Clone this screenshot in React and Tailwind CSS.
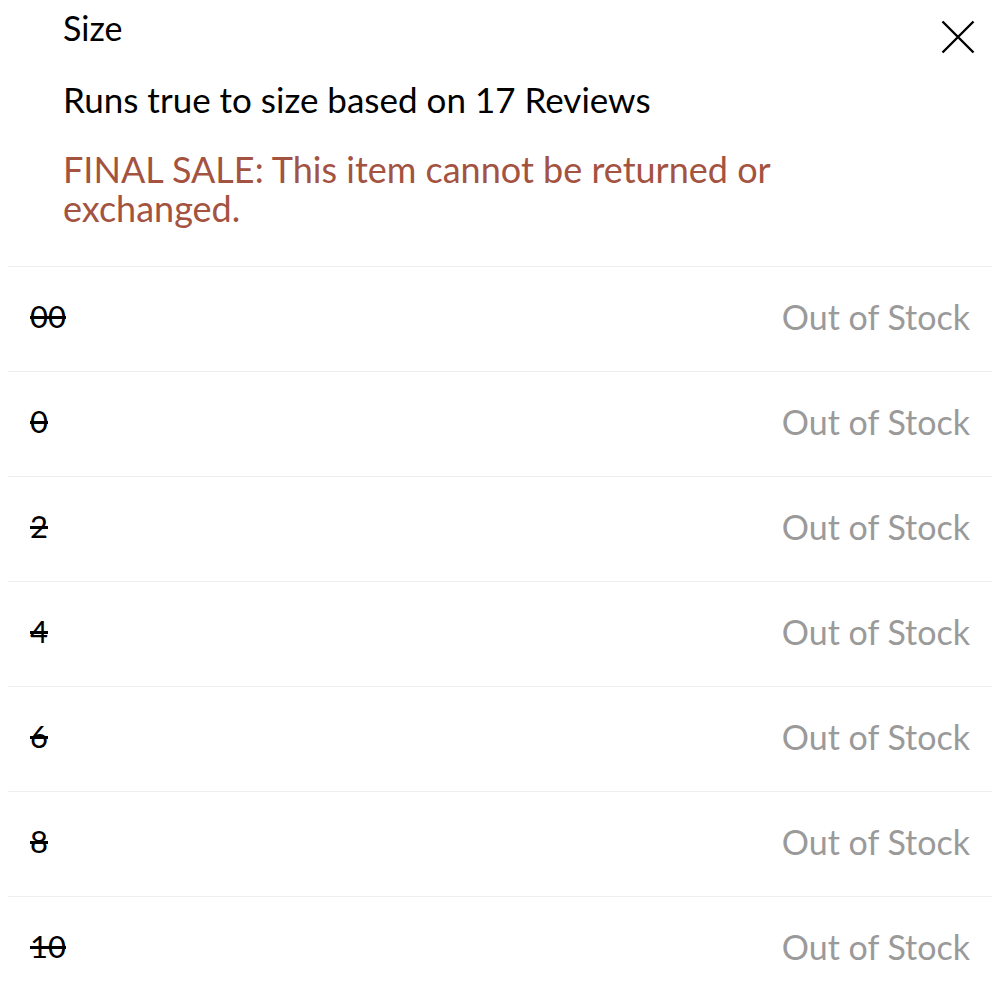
import React from 'react';

const sizes = ['00', '0', '2', '4', '6', '8', '10'];

const App = () => {
  return (
    <div className="min-h-screen bg-white font-['Lato','Liberation_Sans',sans-serif] text-black">
      <div className="flex items-start justify-between pl-[63px] pr-[25px] pt-[9px]">
        <h2 className="text-[34px] leading-[38px]">Size</h2>
        <button type="button" className="mt-[11px] text-black" aria-label="Close">
          <svg width="34" height="34" viewBox="0 0 34 34" fill="none" stroke="currentColor" strokeWidth="2.4">
            <path d="M1.5 1.5L32.5 32.5M32.5 1.5L1.5 32.5" />
          </svg>
        </button>
      </div>

      <p className="pl-[63px] mt-[25px] text-[35px] leading-[40px]">Runs true to size based on 17 Reviews</p>

      <p className="pl-[63px] pr-[200px] mt-[31px] text-[36px] leading-[39px] text-[#a3533f]">
        FINAL SALE: This item cannot be returned or exchanged.
      </p>

      <ul className="mx-[8px] mt-[38px]">
        {sizes.map((s) => (
          <li
            key={s}
            className="flex h-[105px] items-center justify-between border-t border-[#eeeeee] pb-[6px] pl-[22px] pr-[22px]"
          >
            <span className="text-[31px] line-through">{s}</span>
            <span className="text-[34px] text-[#9a9a9a]">Out of Stock</span>
          </li>
        ))}
      </ul>
    </div>
  );
};

export default App;
